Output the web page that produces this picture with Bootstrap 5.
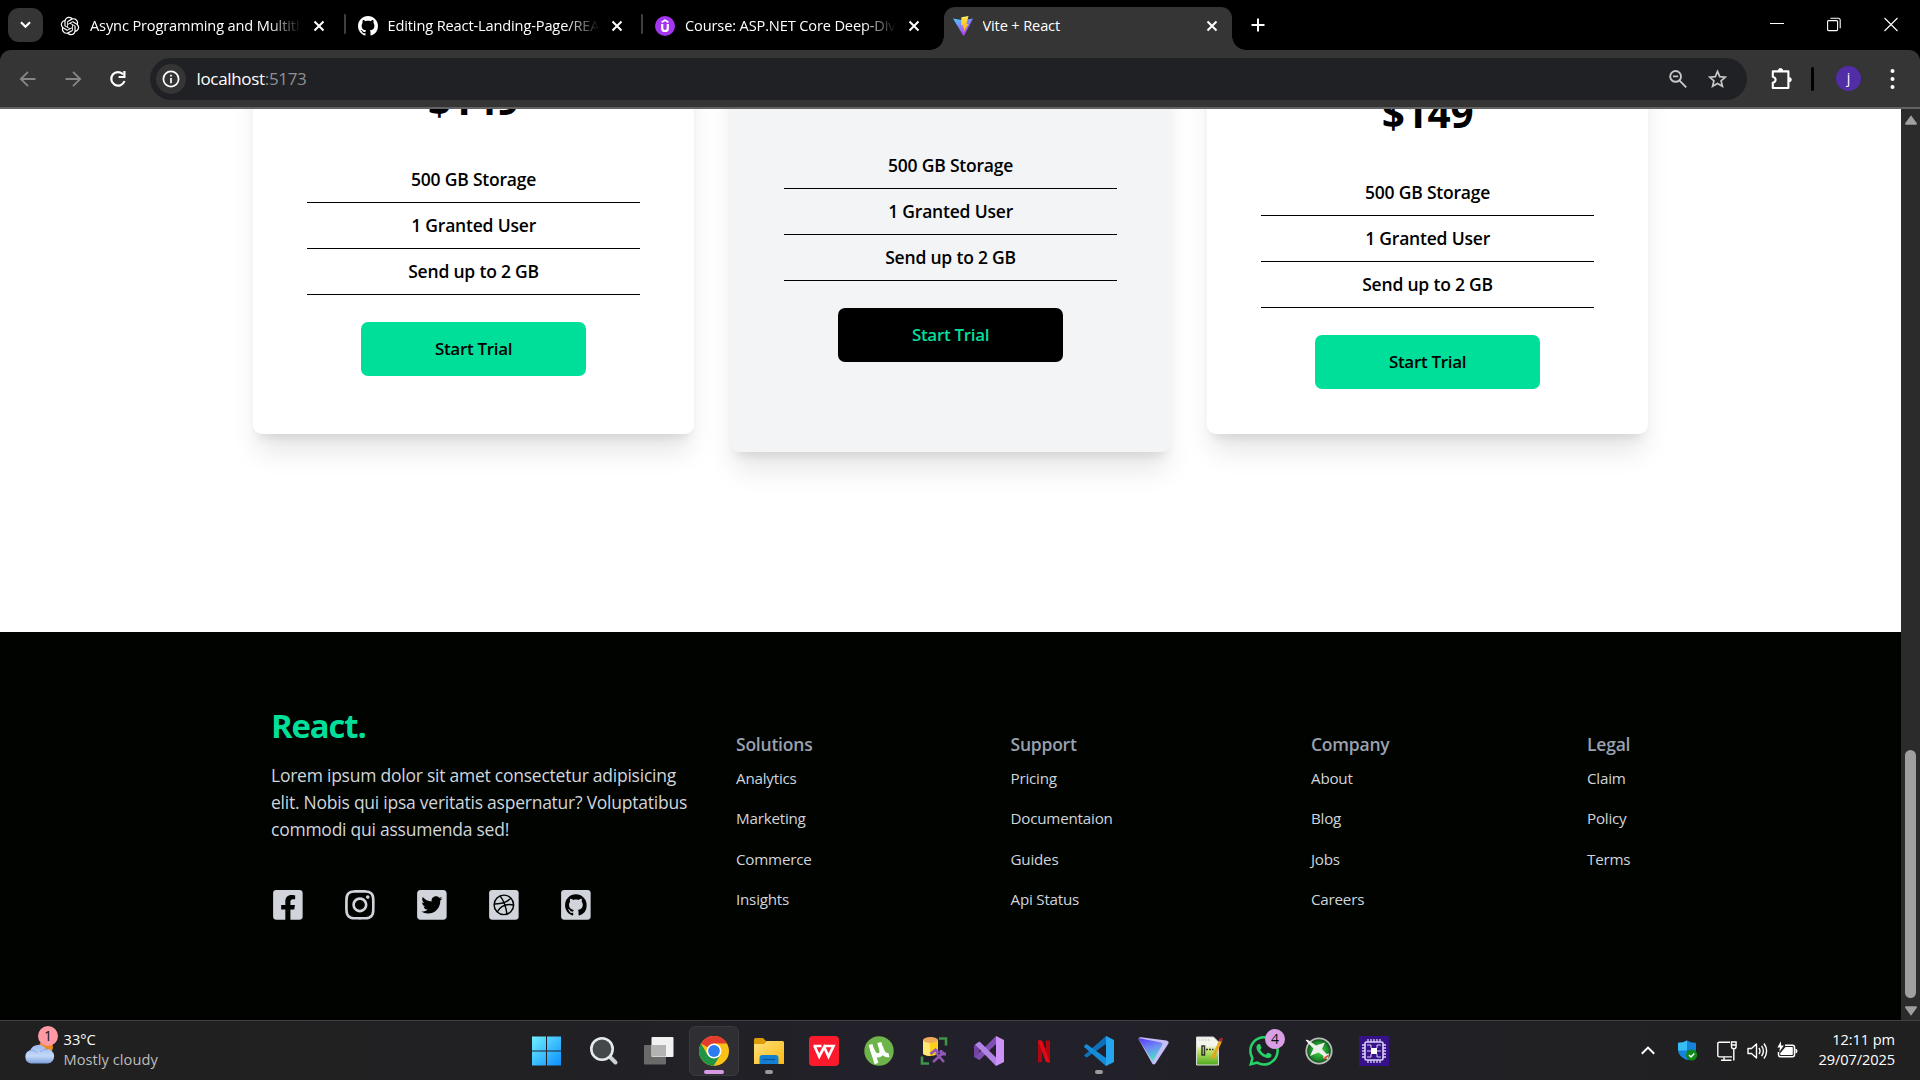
<!DOCTYPE html>
<html lang="en">
<head>
<meta charset="utf-8">
<title>Vite + React</title>
<link href="https://cdn.jsdelivr.net/npm/bootstrap@5.3.0/dist/css/bootstrap.min.css" rel="stylesheet">
<style>
  :root { --brand: #00df9a; }
  body { width: 1920px; height: 1080px; overflow: hidden; font-family: "Open Sans", "Noto Sans", sans-serif; background: #000; color: #000; }
  svg { display: block; flex: none; }

  /* Tab strip */
  .tab-strip { height: 50px; background: #000; color: #fff; padding-left: 8px; }
  .tab-search { width: 35px; height: 34px; border-radius: 11px; background: #353535; margin: 8px 3px 0 0; }
  .tab-item { width: 288.5px; height: 43px; margin: 7px 4px 0 5px; padding: 0 11px 6px 9px; gap: 10px; font-size: 14.6px; letter-spacing: -.14px; position: relative; }
  .tab-item + .tab-item:not(.is-active)::before { content: ""; position: absolute; left: -5px; top: 7px; width: 2px; height: 20px; border-radius: 1px; background: #3f3f3f; }
  .tab-title { white-space: nowrap; overflow: hidden; max-width: 213px; }
  .tab-fade { -webkit-mask-image: linear-gradient(90deg, #000 178px, transparent 211px); mask-image: linear-gradient(90deg, #000 178px, transparent 211px); }
  .tab-item.is-active { background: #353535; border-radius: 11px 11px 0 0; }
  .tab-item.is-active::before, .tab-item.is-active::after { content: ""; position: absolute; bottom: 0; width: 14px; height: 14px; }
  .tab-item.is-active::before { left: -14px; background: radial-gradient(circle at 0 0, transparent 13.5px, #353535 14px); }
  .tab-item.is-active::after { right: -14px; background: radial-gradient(circle at 100% 0, transparent 13.5px, #353535 14px); }
  .tab-plus { margin: 18px 0 0 15px; }
  .window-controls { gap: 43px; padding: 17px 22px 0 0; }

  /* Toolbar */
  .toolbar { height: 59px; background: #353535; border-bottom: 2px solid #636363; border-radius: 11px 11px 0 0; color: #fff; }
  .nav-icons { width: 150px; padding-left: 18.5px; gap: 27px; }
  .address { width: 1597px; height: 42px; border-radius: 21px; background: #202124; padding: 0 20px 0 6px; font-size: 17px; letter-spacing: -.33px; }
  .page-actions { gap: 21.5px; }
  .site-info { width: 30px; height: 30px; background: #353535; margin-right: 10.5px; }
  .port-no { color: #8f9092; }
  .tool-sep { margin: 0 14px; }
  .avatar-dot { width: 25px; height: 25px; background: #522da8; font-size: 14px; line-height: 23px; }

  /* Page */
  .viewport { height: 911px; }
  .page-body { background: #fff; overflow: hidden; }
  .pricing { height: 523px; overflow: hidden; }
  .plan-row { width: 1395px; gap: 36px; margin: -80px auto 0; }
  .plan { width: 441px; height: 404.7px; border-radius: 9px; background: #fff; padding: 0 54px; font-size: 17.5px; font-weight: 600; letter-spacing: -.2px; box-shadow: 0 22.5px 28px -5.6px rgba(0,0,0,.1), 0 9px 11px -6.8px rgba(0,0,0,.1); }
  .plan-first { padding-top: 48px; }
  .plan-mid { height: 423px; padding-top: 34px; background: #f3f4f6; }
  .plan-last { padding-top: 61px; }
  .plan-price { font-size: 40.5px; line-height: 45px; font-weight: 700; margin: 0 0 35px; }
  .plan-list li { height: 46px; line-height: 27px; padding: 9px 0; border-bottom: 1px solid #000; }
  .plan-btn { width: 225px; height: 54px; margin-top: 27px; padding: 0 0 2px; border: 0; border-radius: 7px; background: var(--brand); color: #000; font-size: 17px; font-weight: 600; letter-spacing: -.3px; line-height: 27px; }
  .plan-btn-dark, .plan-btn-dark:hover { background: #000; color: var(--brand); }

  .site-footer { height: 388px; background: #000300; color: #d1d5db; padding: 73px 271px 0; }
  .about { width: 429px; margin-right: 36px; }
  .brand-name { color: var(--brand); font-size: 32.8px; line-height: 40.5px; font-weight: 700; letter-spacing: -1.1px; margin: 0; padding-top: 1px; }
  .about p { font-size: 17.5px; line-height: 27px; letter-spacing: -.24px; margin: 15.5px 0 45px; }
  .socials { gap: 38.25px; }
  .link-col { padding-top: 26px; font-size: 15.2px; letter-spacing: -.22px; }
  .link-col h6 { font-size: 17.5px; line-height: 27px; font-weight: 600; color: #99a1af; letter-spacing: -.22px; margin: 0; }
  .link-col ul { padding-top: 8.5px; }
  .link-col li { line-height: 22.5px; padding-bottom: 18px; }
  .col-a { width: 274.5px; } .col-b { width: 300.5px; } .col-c { width: 276px; } .col-d { width: 60px; }

  .scroll-track { width: 19px; background: #2b2b2b; padding: 6px 0 4px; }
  .scroll-thumb { width: 11px; height: 248px; border-radius: 6px; background: #9f9f9f; margin-bottom: 8px; }

  /* Taskbar */
  .taskbar { height: 60px; background: linear-gradient(90deg, #202020, #212123 25%, #22202a 50%, #212025 72%, #202020); border-top: 1px solid #414141; color: #fff; font-size: 14.6px; line-height: 20px; }
  .weather { width: 521px; padding-left: 24px; gap: 8.5px; }
  .weather-text { padding-bottom: 4px; letter-spacing: .06px; }
  .weather-sub { color: #bdbdbd; }
  .task-cell { width: 55px; height: 59px; position: relative; }
  .task-tile { width: 50px; height: 50px; border-radius: 6px; background: #2f2e33; border: 1px solid #3a393e; }
  .run-dot { position: absolute; left: 50%; bottom: 6px; width: 8px; height: 4px; margin-left: -4px; border-radius: 2px; background: #9a9a9a; }
  .run-wide { width: 20px; margin-left: -10px; background: #d79be3; }
  .count-dot { position: absolute; width: 20px; height: 20px; border-radius: 50%; color: #111; font-size: 14px; line-height: 19px; text-align: center; }
  .count-pink { left: 14px; top: -8px; background: #ff99a4; }
  .count-lilac { left: 29px; top: 8px; background: #d99fe4; }
  .tray { padding-right: 25px; }
  .tray-shield { margin-left: 23px; } .tray-screen { margin-left: 19.5px; } .tray-sound { margin-left: 10px; } .tray-power { margin-left: 9px; }
  .clock-col { width: 97px; padding-bottom: 4px; letter-spacing: -.1px; }
</style>
<script src="https://cdn.jsdelivr.net/npm/bootstrap@5.3.0/dist/js/bootstrap.bundle.min.js"></script>
</head>
<body class="d-flex flex-column">

<header>
  <div class="tab-strip d-flex align-items-start">
    <div class="tab-search d-flex align-items-center justify-content-center">
      <svg width="11" height="8" viewBox="0 0 11 8" fill="none" stroke="#fff" stroke-width="2.2"><path d="M1 1.2l4.500 4.500L10 1.200"/></svg>
    </div>
    <div class="tab-item d-flex align-items-center">
      <svg width="20" height="20" viewBox="-1 -1 26 26" fill="#fff"><path d="M22.28 9.82a5.98 5.98 0 0 0-.51-4.91 6.05 6.05 0 0 0-6.51-2.9A6.07 6.07 0 0 0 4.98 4.18a5.98 5.98 0 0 0-4 2.9 6.05 6.05 0 0 0 .74 7.1 5.98 5.98 0 0 0 .51 4.91 6.05 6.05 0 0 0 6.52 2.9A5.98 5.98 0 0 0 13.26 24a6.06 6.06 0 0 0 5.77-4.21 5.99 5.99 0 0 0 4-2.9 6.06 6.06 0 0 0-.75-7.07zm-9.02 12.61a4.48 4.48 0 0 1-2.88-1.04l.14-.08 4.78-2.76a.79.79 0 0 0 .39-.68v-6.74l2.02 1.17a.07.07 0 0 1 .04.05v5.58a4.5 4.5 0 0 1-4.49 4.5zM3.6 18.3a4.47 4.47 0 0 1-.53-3.01l.14.09 4.78 2.75a.77.77 0 0 0 .78 0l5.84-3.36v2.33a.08.08 0 0 1-.03.06L9.74 19.95A4.5 4.5 0 0 1 3.6 18.3zM2.34 7.9a4.49 4.49 0 0 1 2.37-1.98V11.6a.77.77 0 0 0 .38.68l5.82 3.35-2.02 1.17a.08.08 0 0 1-.07 0l-4.83-2.79A4.5 4.5 0 0 1 2.34 7.87zm16.6 3.85L13.1 8.36 15.12 7.2a.08.08 0 0 1 .07 0l4.83 2.79a4.49 4.49 0 0 1-.68 8.1v-5.67a.79.79 0 0 0-.4-.67zm2.01-3.02l-.14-.09-4.78-2.78a.78.78 0 0 0-.78 0L9.41 9.23V6.9a.07.07 0 0 1 .03-.06l4.83-2.79a4.5 4.5 0 0 1 6.68 4.66zM8.31 12.86l-2.02-1.16a.08.08 0 0 1-.04-.06V6.07a4.5 4.5 0 0 1 7.37-3.45l-.14.08L8.7 5.46a.79.79 0 0 0-.39.68zm1.09-2.36l2.61-1.5 2.6 1.5v3L12.02 15l-2.61-1.5z"/></svg>
      <span class="tab-title tab-fade flex-grow-1">Async Programming and Multith</span>
      <svg width="12" height="12" viewBox="0 0 12 12" stroke="#fff" stroke-width="2"><path d="M1.5 1.5l9 9M10.5 1.5l-9 9"/></svg>
    </div>
    <div class="tab-item d-flex align-items-center">
      <svg width="20" height="20" viewBox="0 0 16 16" fill="#fff"><path id="gh" d="M8 0C3.58 0 0 3.58 0 8c0 3.54 2.29 6.53 5.47 7.59.4.07.55-.17.55-.38 0-.19-.01-.82-.01-1.49-2.01.37-2.53-.49-2.69-.94-.09-.23-.48-.94-.82-1.13-.28-.15-.68-.52-.01-.53.63-.01 1.08.58 1.23.82.72 1.21 1.87.87 2.33.66.07-.52.28-.87.51-1.07-1.78-.2-3.64-.89-3.64-3.95 0-.87.31-1.59.82-2.15-.08-.2-.36-1.02.08-2.12 0 0 .67-.21 2.2.82.64-.18 1.32-.27 2-.27s1.36.09 2 .27c1.53-1.04 2.2-.82 2.2-.82.44 1.1.16 1.92.08 2.12.51.56.82 1.27.82 2.15 0 3.07-1.87 3.75-3.65 3.95.29.25.54.73.54 1.48 0 1.07-.01 1.93-.01 2.2 0 .21.15.46.55.38A8.01 8.01 0 0 0 16 8c0-4.42-3.58-8-8-8z"/></svg>
      <span class="tab-title tab-fade flex-grow-1">Editing React-Landing-Page/REA</span>
      <svg width="12" height="12" viewBox="0 0 12 12" stroke="#fff" stroke-width="2"><path d="M1.5 1.5l9 9M10.5 1.5l-9 9"/></svg>
    </div>
    <div class="tab-item d-flex align-items-center">
      <svg width="20" height="20" viewBox="0 0 20 20" fill="none" stroke="#fff"><circle cx="10" cy="10" r="10" fill="#a435f0" stroke="none"/><path d="M6.6 6.2L10 4.2l3.4 2" stroke-width="1.6"/><path d="M7.2 8v4.2a2.8 2.8 0 0 0 5.6 0V8" stroke-width="2.2"/></svg>
      <span class="tab-title tab-fade flex-grow-1">Course: ASP.NET Core Deep-Div</span>
      <svg width="12" height="12" viewBox="0 0 12 12" stroke="#fff" stroke-width="2"><path d="M1.5 1.5l9 9M10.5 1.5l-9 9"/></svg>
    </div>
    <div class="tab-item is-active d-flex align-items-center">
      <svg width="20" height="20" viewBox="0 0 20 20"><defs><linearGradient id="vt" x1="0" y1="0" x2=".6" y2="1"><stop stop-color="#41d1ff"/><stop offset="1" stop-color="#bd34fe"/></linearGradient><linearGradient id="vb" x1="0" y1="0" x2="0" y2="1"><stop stop-color="#ffea83"/><stop offset=".2" stop-color="#ffdd35"/><stop offset="1" stop-color="#ffa800"/></linearGradient></defs><path d="M0 2.5l9.8 1.7L20 2.5 11.2 19.6h-1z" fill="url(#vt)"/><path d="M15.500 0L8.400 1.200 8 9.400l2.200-.4-.6 3 1.500-.4-.6 4.800 5-8.500-2.200.4z" fill="url(#vb)"/></svg>
      <span class="tab-title flex-grow-1">Vite + React</span>
      <svg width="12" height="12" viewBox="0 0 12 12" stroke="#fff" stroke-width="2"><path d="M1.5 1.5l9 9M10.5 1.5l-9 9"/></svg>
    </div>
    <svg class="tab-plus" width="14" height="14" viewBox="0 0 14 14" stroke="#fff" stroke-width="2"><path d="M7 .5v13M.5 7h13"/></svg>
    <div class="window-controls d-flex ms-auto">
      <svg width="14" height="15" viewBox="0 0 14 15" stroke="#fff"><path d="M0 6.5h14"/></svg>
      <svg width="14" height="15" viewBox="0 0 14 15" fill="none" stroke="#fff" stroke-width="1.1"><rect x=".6" y="3.6" width="10" height="10" rx="1"/><path d="M3.4 1.3h7.8a2 2 0 0 1 2 2v8"/></svg>
      <svg width="14" height="15" viewBox="0 0 14 15" stroke="#fff" stroke-width="1.1"><path d="M.5 1l13 13M13.5 1l-13 13"/></svg>
    </div>
  </div>

  <div class="toolbar d-flex align-items-center">
    <div class="nav-icons d-flex align-items-center">
      <svg width="18" height="18" viewBox="0 0 18 18" fill="none" stroke="#868686" stroke-width="1.8"><path d="M16.5 9H2M9 1.8L1.8 9 9 16.2"/></svg>
      <svg width="18" height="18" viewBox="0 0 18 18" fill="none" stroke="#868686" stroke-width="1.8"><path d="M1.5 9H16M9 1.8L16.2 9 9 16.2"/></svg>
      <svg width="18" height="18" viewBox="0 0 18 18" fill="none" stroke="#fff" stroke-width="2.2"><path d="M14.2 4.400A6.800 6.800 0 1 0 15.500 11"/><path d="M15.400 1v6H9.600"/></svg>
    </div>
    <div class="address d-flex align-items-center">
      <div class="site-info rounded-circle d-flex align-items-center justify-content-center">
        <svg width="18" height="18" viewBox="0 0 18 18" fill="none" stroke="#fff" stroke-width="1.7"><circle cx="9" cy="9" r="7.6"/><path d="M9 8v5.2M9 4.8v1.8"/></svg>
      </div>
      <span>localhost</span><span class="port-no">:5173</span>
      <div class="page-actions d-flex align-items-center ms-auto">
        <svg width="18" height="20" viewBox="0 0 18 20" fill="none" stroke="#c7c7c7" stroke-width="1.9"><circle cx="6.6" cy="7.4" r="5.4"/><path d="M10.6 11.6l6.6 6.8M4 7.4h5.2"/></svg>
        <svg width="19" height="20" viewBox="0 0 19 20" fill="none" stroke="#c7c7c7" stroke-width="1.7"><path d="M9.5 2.4l2.2 5.2 5.7.5-4.3 3.7 1.3 5.5-4.9-2.9-4.9 2.9 1.3-5.5L1.6 8.1l5.7-.5z"/></svg>
      </div>
    </div>
    <svg class="ms-4" width="21" height="24" viewBox="0 0 21 24" fill="none" stroke="#fff" stroke-width="2.1" stroke-linejoin="round"><path d="M1.8 4.400h15.600v16.600H1.800v-5.200q2.800-.8 2.800-3t-2.800-3z"/><path d="M7.400 3.600a2.100 2.100 0 0 1 4.200 0zM18.200 10.600a2.100 2.100 0 0 1 0 4.200z" fill="#fff" stroke-width="1"/></svg>
    <svg class="tool-sep" width="12" height="24" viewBox="0 0 12 24"><rect x="5" width="3" height="24" rx="1.5" fill="#000"/></svg>
    <div class="avatar-dot rounded-circle text-center ms-1">j</div>
    <svg class="ms-4" width="21" height="24" viewBox="0 0 21 24" fill="#fff"><circle cx="7.500" cy="4" r="2"/><circle cx="7.500" cy="12" r="2"/><circle cx="7.500" cy="20" r="2"/></svg>
  </div>
</header>

<div class="viewport d-flex">
  <main class="page-body flex-grow-1">
    <section class="pricing">
      <div class="plan-row d-flex align-items-start">
        <article class="plan plan-first text-center">
          <p class="plan-price">$149</p>
          <ul class="plan-list list-unstyled mb-0"><li>500 GB Storage</li><li>1 Granted User</li><li>Send up to 2 GB</li></ul>
          <button class="btn plan-btn">Start Trial</button>
        </article>
        <article class="plan plan-mid text-center">
          <p class="plan-price">$149</p>
          <ul class="plan-list list-unstyled mb-0"><li>500 GB Storage</li><li>1 Granted User</li><li>Send up to 2 GB</li></ul>
          <button class="btn plan-btn plan-btn-dark">Start Trial</button>
        </article>
        <article class="plan plan-last text-center">
          <p class="plan-price">$149</p>
          <ul class="plan-list list-unstyled mb-0"><li>500 GB Storage</li><li>1 Granted User</li><li>Send up to 2 GB</li></ul>
          <button class="btn plan-btn">Start Trial</button>
        </article>
      </div>
    </section>
    <footer class="site-footer d-flex">
      <div class="about flex-shrink-0">
        <h1 class="brand-name">React.</h1>
        <p>Lorem ipsum dolor sit amet consectetur adipisicing elit. Nobis qui ipsa veritatis aspernatur? Voluptatibus commodi qui assumenda sed!</p>
        <div class="socials d-flex">
          <svg width="33.75" height="33.75" viewBox="-32 0 512 512" fill="#d1d5db"><path d="M400 32H48A48 48 0 0 0 0 80v352a48 48 0 0 0 48 48h137.25V327.69h-63V256h63v-54.64c0-62.15 37-96.48 93.67-96.48 27.14 0 55.52 4.84 55.52 4.84v61h-31.27c-30.81 0-40.42 19.12-40.42 38.73V256h68.78l-11 71.69h-57.78V480H400a48 48 0 0 0 48-48V80a48 48 0 0 0-48-48z"/></svg>
          <svg width="33.75" height="33.75" viewBox="-32 0 512 512" fill="#d1d5db"><path d="M224.1 141c-63.6 0-114.9 51.3-114.9 114.9s51.3 114.9 114.9 114.9S339 319.5 339 255.9 287.7 141 224.1 141zm0 189.6c-41.1 0-74.7-33.5-74.7-74.7s33.5-74.7 74.7-74.7 74.7 33.5 74.7 74.7-33.6 74.7-74.7 74.7zm146.4-194.3c0 14.9-12 26.8-26.8 26.8-14.9 0-26.8-12-26.8-26.8s12-26.8 26.8-26.8 26.8 12 26.8 26.8zm76.1 27.2c-1.7-35.9-9.9-67.7-36.2-93.9-26.2-26.2-58-34.4-93.9-36.2-37-2.1-147.9-2.1-184.9 0-35.8 1.7-67.6 9.9-93.9 36.1s-34.4 58-36.2 93.9c-2.1 37-2.1 147.9 0 184.9 1.7 35.9 9.9 67.7 36.2 93.9s58 34.4 93.9 36.2c37 2.1 147.9 2.1 184.9 0 35.9-1.7 67.7-9.9 93.9-36.2 26.2-26.2 34.4-58 36.2-93.9 2.1-37 2.1-147.8 0-184.8zM398.8 388c-7.8 19.6-22.9 34.7-42.6 42.6-29.5 11.7-99.5 9-132.1 9s-102.7 2.6-132.1-9c-19.6-7.8-34.7-22.9-42.6-42.6-11.7-29.5-9-99.5-9-132.1s-2.6-102.7 9-132.1c7.8-19.6 22.9-34.7 42.6-42.6 29.5-11.7 99.5-9 132.1-9s102.7-2.6 132.1 9c19.6 7.8 34.7 22.9 42.6 42.6 11.7 29.5 9 99.5 9 132.1s2.7 102.7-9 132.1z"/></svg>
          <svg width="33.75" height="33.75" viewBox="-32 0 512 512" fill="#d1d5db"><path d="M400 32H48C21.5 32 0 53.5 0 80v352c0 26.5 21.5 48 48 48h352c26.5 0 48-21.5 48-48V80c0-26.5-21.5-48-48-48zm-48.9 158.8c.2 2.8.2 5.7.2 8.5 0 86.7-66 186.6-186.6 186.6-37.2 0-71.7-10.8-100.7-29.4 5.3.6 10.4.8 15.8.8 30.7 0 58.9-10.4 81.4-28-28.8-.6-53-19.5-61.3-45.5 10.1 1.5 19.2 1.5 29.6-1.2-30-6.1-52.5-32.5-52.5-64.4v-.8c8.7 4.9 18.9 7.9 29.6 8.3a65.447 65.447 0 0 1-29.2-54.6c0-12.2 3.2-23.4 8.9-33.1 32.3 39.8 80.8 65.8 135.2 68.6-9.3-44.5 24-80.6 64-80.6 18.9 0 35.9 7.9 47.9 20.7 14.8-2.8 29-8.3 41.6-15.8-4.9 15.2-15.2 28-28.8 36.1 13.2-1.4 26-5.1 37.8-10.2-8.9 13.1-20.1 24.7-32.9 34z"/></svg>
          <svg width="33.75" height="33.75" viewBox="-32 0 512 512" fill="none" stroke="#000300" stroke-width="22"><rect y="32" width="448" height="448" rx="48" fill="#d1d5db" stroke="none"/><circle cx="224" cy="256" r="148"/><path d="M166 120c50 62 88 150 104 276M78 242c100 2 190-14 252-88M122 364c50-88 134-132 250-106"/></svg>
          <svg width="33.75" height="33.75" viewBox="-32 0 512 512"><rect y="32" width="448" height="448" rx="48" fill="#d1d5db"/><use href="#gh" fill="#000300" transform="translate(60 96) scale(20.5)"/></svg>
        </div>
      </div>
      <div class="link-col col-a flex-shrink-0"><h6>Solutions</h6><ul class="list-unstyled mb-0"><li>Analytics</li><li>Marketing</li><li>Commerce</li><li>Insights</li></ul></div>
      <div class="link-col col-b flex-shrink-0"><h6>Support</h6><ul class="list-unstyled mb-0"><li>Pricing</li><li>Documentaion</li><li>Guides</li><li>Api Status</li></ul></div>
      <div class="link-col col-c flex-shrink-0"><h6>Company</h6><ul class="list-unstyled mb-0"><li>About</li><li>Blog</li><li>Jobs</li><li>Careers</li></ul></div>
      <div class="link-col col-d flex-shrink-0"><h6>Legal</h6><ul class="list-unstyled mb-0"><li>Claim</li><li>Policy</li><li>Terms</li></ul></div>
    </footer>
  </main>
  <div class="scroll-track d-flex flex-column align-items-center">
    <svg width="12" height="10" viewBox="0 0 12 10" fill="#9f9f9f"><path d="M6 .2L12 8.600q0 1.200-1.200 1.200H1.200Q0 9.800 0 8.600z"/></svg>
    <div class="scroll-thumb mt-auto"></div>
    <svg width="12" height="10" viewBox="0 0 12 10" fill="#9f9f9f"><path d="M6 9.800L12 1.400q0-1.200-1.200-1.200H1.200Q0 .2 0 1.400z"/></svg>
  </div>
</div>

<footer class="taskbar d-flex align-items-center">
  <div class="weather d-flex align-items-center flex-shrink-0">
    <div class="position-relative pb-1">
      <svg width="31" height="30" viewBox="0 0 31 30"><defs><linearGradient id="cl" x1="0" y1="0" x2="0" y2="1"><stop stop-color="#9db8ee"/><stop offset=".6" stop-color="#c4d9f8"/><stop offset="1" stop-color="#7d9fdc"/></linearGradient></defs><circle cx="22" cy="13" r="7" fill="#f08a1d"/><path d="M7 29.500a6.800 6.800 0 0 1-.8-13.200 8.800 8.800 0 0 1 15.600-1.300 7.300 7.300 0 0 1 2 14.500z" fill="url(#cl)"/><path d="M5 17q5-2 8.500 2.200M16 18q4-4 8-2.300" fill="none" stroke="#8cabe6"/></svg>
      <span class="count-dot count-pink">1</span>
    </div>
    <div class="weather-text"><div>33°C</div><div class="weather-sub">Mostly cloudy</div></div>
  </div>
  <div class="d-flex flex-shrink-0">
    <div class="task-cell d-flex align-items-center justify-content-center">
      <svg width="33" height="30" viewBox="0 0 33 30"><defs><linearGradient id="wn" x1="0" y1="0" x2="1" y2="1"><stop stop-color="#6ff0ff"/><stop offset="1" stop-color="#0c8fff"/></linearGradient></defs><path d="M0 .5h14v14H0zM15 .5h14v14H15zM0 15.500h14v14H0zM15 15.500h14v14H15z" fill="url(#wn)"/></svg>
    </div>
    <div class="task-cell d-flex align-items-center justify-content-center">
      <svg width="30" height="30" viewBox="0 0 30 30"><path d="M20 20l6.500 6.500" stroke="#c9d1d6" stroke-width="4" stroke-linecap="round"/><circle cx="13" cy="13" r="10.700" fill="#45484b" stroke="#e6eaec" stroke-width="2.600"/></svg>
    </div>
    <div class="task-cell d-flex align-items-center justify-content-center">
      <svg width="30" height="30" viewBox="0 0 30 30"><rect x="0" y="9" width="22" height="19.500" rx="1" fill="#6a6a6a"/><rect x="7.500" y="1" width="22" height="20" rx="1" fill="#f1f1f1"/><rect x="7.500" y="9" width="14.500" height="11.500" fill="#b3b3b3"/></svg>
    </div>
    <div class="task-cell d-flex align-items-center justify-content-center">
      <div class="task-tile d-flex align-items-center justify-content-center">
        <svg width="30" height="30" viewBox="0 0 30 30"><circle cx="15" cy="15" r="15" fill="#fbc117"/><path d="M15 15L2 7.500A15 15 0 0 1 28 7.500H15z" fill="#e33b2e"/><path d="M2 7.500A15 15 0 0 0 14.600 30L21.500 18.750 8.500 18.750z" fill="#1e9444"/><circle cx="15" cy="15" r="7.500" fill="#fff"/><circle cx="15" cy="15" r="5.900" fill="#2b7cf0"/></svg>
      </div><span class="run-dot run-wide"></span>
    </div>
    <div class="task-cell d-flex align-items-center justify-content-center">
      <svg width="30" height="30" viewBox="0 0 30 30"><defs><linearGradient id="fo" x1="0" y1="0" x2="1" y2="1"><stop stop-color="#ffe07c"/><stop offset="1" stop-color="#fcb913"/></linearGradient></defs><path d="M0 3.500Q0 2 1.500 2H9l3 3h10v6H0z" fill="#dc9c0a"/><path d="M0 8h10l3-3h15.500Q30 5 30 6.500V28H0z" fill="url(#fo)"/><path d="M5.500 28v-6q0-3 3-3h13q3 0 3 3v6z" fill="#1380d3"/><path d="M9 23.500h12" stroke="#0b5394" stroke-width="1.300"/></svg>
      <span class="run-dot"></span>
    </div>
    <div class="task-cell d-flex align-items-center justify-content-center">
      <svg width="30" height="30" viewBox="0 0 30 30"><rect width="30" height="30" rx="4" fill="#fb1a2b"/><path d="M4.500 10h8M5.500 10l4.700 10.500 5-9.500 4.300 9.500L24.500 10H14.500" fill="none" stroke="#fff" stroke-width="2.700"/></svg>
    </div>
    <div class="task-cell d-flex align-items-center justify-content-center">
      <svg width="30" height="30" viewBox="0 0 30 30"><circle cx="15" cy="15" r="14.700" fill="#6fb44a"/><path d="M6.500 8.500q3 10 6 19" fill="none" stroke="#fff" stroke-width="4"/><path d="M8 13q2.500 7.500 7 6.300 4-1.300 1.800-7.800L15.300 6.500M17 11q2.500 9.500 8 8" fill="none" stroke="#fff" stroke-width="4.200"/></svg>
    </div>
    <div class="task-cell d-flex align-items-center justify-content-center">
      <svg width="30" height="30" viewBox="0 0 30 30"><path d="M4 4v14q7 4 15 0V4z" fill="#fbcf1c"/><path d="M4 4v14q3 2 7 2V4z" fill="#ffe875"/><ellipse cx="11.500" cy="4" rx="7.500" ry="3" fill="#eeaa5c"/><path d="M20 2.500h7v7M3 20.500v7h7" fill="none" stroke="#3f9448" stroke-width="2.600"/><path d="M14 26l11-10M17 17l8 9" stroke="#9256b8" stroke-width="2.600"/><path d="M11.500 18l5-4 3 3M22 14v4h5" fill="none" stroke="#9256b8" stroke-width="2.800"/></svg>
    </div>
    <div class="task-cell d-flex align-items-center justify-content-center">
      <svg width="30" height="30" viewBox="0 0 30 30"><path d="M0 9.500L5.500 6v18L0 21z" fill="#74439f"/><path d="M5.500 24L22 8V0L1 21z" fill="#7d4fb0"/><path d="M1 8.500l4.500-3L22 21.500V30z" fill="#b183e4"/><path d="M22 0l8 4v22l-8 4z" fill="#cd92f7"/></svg>
    </div>
    <div class="task-cell d-flex align-items-center justify-content-center">
      <svg width="30" height="30" viewBox="0 0 30 30"><path d="M9 4.500h4V26l-4 .5zM17 4.500h4v22l-4-.5z" fill="#b1060f"/><path d="M9 4.500h4l8 22-4-.5z" fill="#e50914"/></svg>
    </div>
    <div class="task-cell d-flex align-items-center justify-content-center">
      <svg width="30" height="30" viewBox="0 0 30 30"><path d="M0 19.500l2.500 2.300L22 8V0L1 18.500z" fill="#0e70b8"/><path d="M0 10l2.500-2L22 22v8L.5 11.300z" fill="#168bd8"/><path d="M22 0l8 4v22l-8 4z" fill="#26a5ef"/></svg>
      <span class="run-dot"></span>
    </div>
    <div class="task-cell d-flex align-items-center justify-content-center">
      <svg width="31" height="30" viewBox="0 0 31 30"><defs><linearGradient id="pv" x1=".1" y1="0" x2=".5" y2="1"><stop stop-color="#5a3df0"/><stop offset=".5" stop-color="#6f8cf5"/><stop offset="1" stop-color="#48e6c0"/></linearGradient></defs><path d="M.5 3Q.5 1 3 1.300L28.500 4.500q3 .6 1.800 3.200L17.500 27.500q-1.800 2.200-3.300 0z" fill="#c6bdf9"/><path d="M.5 3Q1 2 3 2.500L23 6.500q2.200.7 1.200 2.500L14.800 25.500z" fill="url(#pv)"/></svg>
    </div>
    <div class="task-cell d-flex align-items-center justify-content-center">
      <svg width="30" height="30" viewBox="0 0 30 30"><defs><linearGradient id="np" x1="0" y1="0" x2="0" y2="1"><stop offset=".3" stop-color="#f4f6ee"/><stop offset=".5" stop-color="#c3e468"/><stop offset="1" stop-color="#4ca81d"/></linearGradient></defs><path d="M2.500 1h17l5 5v23h-22z" fill="url(#np)" stroke="#d9d9d9"/><path d="M5 4h12" stroke="#b9b9b9" stroke-dasharray="1.500 1.500"/><path d="M8 10v9h2.500v-9zM12 13.500h2M15 13.500h2M18 13.500h1.500" fill="none" stroke="#333" stroke-width="1.500"/><path d="M18.500 22.500L27 4" stroke="#e8a51b" stroke-width="3"/><path d="M26.300 5.500l1.600-3.500" stroke="#a3282c" stroke-width="3"/></svg>
    </div>
    <div class="task-cell d-flex align-items-center justify-content-center">
      <svg width="30" height="30" viewBox="0 0 16 16" fill="#25d366"><path d="M13.601 2.326A7.850 7.850 0 0 0 7.994 0C3.627 0 .068 3.558.064 7.926c0 1.399.366 2.760 1.057 3.965L0 16l4.204-1.102a7.900 7.900 0 0 0 3.790.965h.004c4.368 0 7.926-3.558 7.930-7.930A7.900 7.900 0 0 0 13.600 2.326zM7.994 14.521a6.600 6.600 0 0 1-3.356-.920l-.240-.144-2.494.654.666-2.433-.156-.251a6.560 6.560 0 0 1-1.007-3.505c0-3.626 2.957-6.584 6.591-6.584a6.560 6.560 0 0 1 4.660 1.931 6.560 6.560 0 0 1 1.928 4.660c-.004 3.639-2.961 6.592-6.592 6.592m3.615-4.934c-.197-.099-1.170-.578-1.353-.646-.182-.065-.315-.099-.445.099-.133.197-.513.646-.627.775-.114.133-.232.148-.430.050-.197-.100-.836-.308-1.592-.985-.590-.525-.985-1.175-1.103-1.372-.114-.198-.011-.304.088-.403.087-.088.197-.232.296-.346.100-.114.133-.198.198-.330.065-.134.034-.248-.015-.347-.050-.099-.445-1.076-.612-1.470-.160-.389-.323-.335-.445-.340-.114-.007-.247-.007-.380-.007a.730.730 0 0 0-.529.247c-.182.198-.691.677-.691 1.654s.710 1.916.810 2.049c.098.133 1.394 2.132 3.383 2.992.470.205.840.326 1.129.418.475.152.904.129 1.246.080.380-.058 1.171-.480 1.338-.943.164-.464.164-.860.114-.943-.049-.084-.182-.133-.380-.232"/></svg>
      <span class="count-dot count-lilac">4</span>
    </div>
    <div class="task-cell d-flex align-items-center justify-content-center">
      <svg width="30" height="30" viewBox="0 0 30 30"><defs><radialGradient id="af"><stop stop-color="#3fdc3f"/><stop offset=".7" stop-color="#1d8a2b"/><stop offset="1" stop-color="#123c1a"/></radialGradient></defs><circle cx="15" cy="15" r="12.700" fill="url(#af)" stroke="#b9bdb9" stroke-width="1.800"/><path d="M1.500 4q2-.6 4 1l6.500 4.500L21 6.500l-3 6.500 4.500 5 2.500-.5-1 5.500-5-1 .5-2-5-3.500-8.500 3.500 3.500-7.500-5.500-5.500z" fill="#ecefec"/><path d="M19.500 23l5-3.500" stroke="#e0502d" stroke-width="1.800"/></svg>
    </div>
    <div class="task-cell d-flex align-items-center justify-content-center">
      <svg width="30" height="30" viewBox="0 0 30 30" fill="none" stroke="#d9cff5"><rect width="30" height="30" fill="#371188" stroke="none"/><rect x="6" y="6" width="18" height="18" rx="1.500" stroke-width="1.600"/><path d="M9 3v3M12 3v3M15 3v3M18 3v3M21 3v3M9 24v3M12 24v3M15 24v3M18 24v3M21 24v3M3 9h3M3 12h3M3 15h3M3 18h3M3 21h3M24 9h3M24 12h3M24 15h3M24 18h3M24 21h3" stroke-width="1.300"/><path d="M8 9h4v3M22 9h-4v3M8 21h4v-3M22 21h-4v-3M8 15h4M18 15h4" stroke-width="1"/><rect x="12" y="12" width="6" height="6" fill="#fff" stroke="none"/></svg>
    </div>
  </div>
  <div class="tray d-flex align-items-center ms-auto">
    <svg width="14" height="9" viewBox="0 0 14 9" fill="none" stroke="#fff" stroke-width="2"><path d="M.8 7.800L7 1.600l6.200 6.200"/></svg>
    <svg class="tray-shield" width="20" height="21" viewBox="0 0 20 21"><path d="M9 .5q4 2.500 9 2.200V10q0 6-9 10.200Q0 16 0 10V2.700Q5 3 9 .5z" fill="#1583dc"/><path d="M9 .5V10.500H0V2.700Q5 3 9 .5z" fill="#38bdf2"/><path d="M9 10.500h9q-.6 6-9 9.700z" fill="#0d5fb5"/><circle cx="13.600" cy="15" r="5.600" fill="#0f8a16"/><path d="M11 15l2 2 3.300-3.600" fill="none" stroke="#fff" stroke-width="1.500"/></svg>
    <svg class="tray-screen" width="20" height="20" viewBox="0 0 20 20" fill="none" stroke="#fff" stroke-width="1.400"><path d="M13 1.200H2.400Q.8 1.200.8 2.800v11.500q0 1.600 1.600 1.600H15M7 16v3M4 19.200h10.500"/><path d="M14.500 1h4.600v4.500q0 2.300-2.300 2.300t-2.300-2.300zM14.500 4h4.600M16.800 8v11.500"/></svg>
    <svg class="tray-sound" width="21" height="20" viewBox="0 0 21 20" fill="none" stroke="#fff" stroke-width="1.400"><path d="M1 7.500h3.500L9.500 3v14l-5-4.500H1z" stroke-linejoin="round"/><path d="M12 7q2 3 0 6M14.600 4.800q3.600 5.200 0 10.400M17 2.500q5.200 7.500 0 15"/></svg>
    <svg class="tray-power" width="21" height="20" viewBox="0 0 21 20"><path d="M8 4.200h7.500q2 0 2 2v7.600q0 2-2 2h-12q-2 0-2-2V11" fill="none" stroke="#fff" stroke-width="1.500"/><path d="M8.500 6H15q.8 0 .8.800v6.400q0 .8-.8.800H4q-.8 0-.8-.8v-1z" fill="#fff"/><path d="M18.500 7.500q2 .5 2 2.500t-2 2.500z" fill="#fff"/><path d="M4 .3L.3 6.500H3L2.300 11 6.800 4.600H4z" fill="#fff"/></svg>
    <div class="clock-col text-end"><div>12:11 pm</div><div>29/07/2025</div></div>
  </div>
</footer>
</body>
</html>
